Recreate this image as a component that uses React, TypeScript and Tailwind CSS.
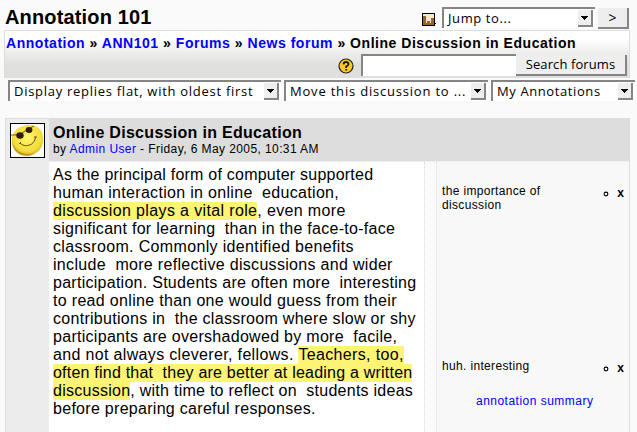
import type { ReactNode } from "react";

const ARIAL = "font-['Liberation_Sans',Arial,sans-serif]";
const HUMAN = "font-['Open_Sans','Noto_Sans',sans-serif]";

function Arrow() {
  return (
    <span className="flex h-[17px] w-[15px] shrink-0 items-center justify-center border-r-2 border-b-2 border-[#858585] bg-[#eeeeee]">
      <svg width="7" height="4" viewBox="0 0 7 4" shapeRendering="crispEdges">
        <path d="M0 0h7v1h-1v1h-1v1h-1v1h-1v-1h-1v-1h-1v-1h-1z" fill="#000" />
      </svg>
    </span>
  );
}

function Select({ className, label, track }: { className: string; label: string; track: string }) {
  return (
    <div className={`flex h-[21px] shrink-0 justify-between border-t-2 border-l-2 border-[#858585] bg-white pr-[2px] pt-px ${HUMAN} ${className}`}>
      <span className={`pl-[4px] text-[13px] leading-[17px] ${track}`}>{label}</span>
      <Arrow />
    </div>
  );
}

function Line({ track, children }: { track: string; children: ReactNode }) {
  return (
    <div className="h-[18px]">
      <span className={track}>{children}</span>
    </div>
  );
}

function Mark({ children }: { children: ReactNode }) {
  return <span className="inline-block h-[18px] bg-[#fdf375] align-top">{children}</span>;
}

function Note({ children }: { children: ReactNode }) {
  return (
    <div className="flex h-[28px] justify-between pl-[5px] pr-[5px] text-[12px] leading-[14px]">
      <div className="tracking-[0.34px]">{children}</div>
      <div className="flex items-start gap-[8px] pt-[2px]">
        <svg className="mt-[5px]" width="6" height="6" viewBox="0 0 6 6">
          <circle cx="3" cy="3" r="1.9" fill="none" stroke="#000" strokeWidth="1.1" />
        </svg>
        <span className="font-bold leading-[15px]">x</span>
      </div>
    </div>
  );
}

function Smiley() {
  return (
    <svg width="35" height="35" viewBox="0 0 35 35">
      <defs>
        <radialGradient id="face" cx=".5" cy=".4" r=".65">
          <stop offset="0" stopColor="#fff56e" />
          <stop offset=".7" stopColor="#f3dc3b" />
          <stop offset="1" stopColor="#c49a1c" />
        </radialGradient>
      </defs>
      <rect width="35" height="35" fill="#fff" />
      <path d="M2 17C2 8 10 1.500 20 2c8 0 13 6 13 13 1 9-5 16-14 18C9 34 1 27 2 17z" fill="url(#face)" />
      <path d="M2.500 19c2 10 12 14 22 11-8 5-21 2-22-11z" fill="#a98516" opacity=".7" />
      <path d="M1 12l8 0 9-6 6-3" fill="none" stroke="#4c3510" strokeWidth=".8" />
      <ellipse cx="10" cy="12.500" rx="3.700" ry="3.200" fill="#301a0b" />
      <ellipse cx="19" cy="7" rx="3.400" ry="3" fill="#301a0b" />
      <path d="M10 20c4 5 15 3 15.500-6M9 21l2-2M24 14l3 0" fill="none" stroke="#69501a" strokeWidth="1" />
      <rect x=".5" y=".5" width="34" height="34" fill="none" stroke="#000" />
    </svg>
  );
}

export default function App() {
  return (
    <div className={`h-[432px] w-[637px] overflow-hidden bg-[#fafafa] text-black ${ARIAL}`}>
      <div className="flex h-[30px] items-start pl-[5px]">
        <h1 className="w-[417px] pt-[5px] text-[20px] leading-[24px] font-bold tracking-[0.15px]">Annotation 101</h1>
        <svg className="mt-[13px] mr-[5px]" width="15" height="13" viewBox="0 0 15 13" shapeRendering="crispEdges">
          <path d="M0 0h13v10h1v1h-1v2H0z" fill="#000" />
          <path d="M1 1h11v11H1z" fill="#f7e8d0" />
          <path d="M1 3h3v9H1zM4 10h1v2H4zM5 8h3v4H5zM8 10h1v2H8zM9 5h3v7H9z" fill="#9a622f" />
        </svg>
        <div className="pt-[7px]"><Select className="w-[153px]" label="Jump to..." track="tracking-[0.6px]" /></div>
        <div className={`mt-[8px] ml-[3px] flex h-[21px] w-[31px] items-center justify-center border-r-2 border-b-2 border-[#858585] bg-[#eeeeee] text-[14px] font-medium ${HUMAN}`}>&gt;</div>
      </div>
      <div className="ml-[4px] h-[48px] w-[626px] border border-[#dddddd] bg-linear-to-b from-white from-15% to-[#dfdfdd] to-75%">
        <div className="h-[23px] pl-px text-[14px] leading-[25px] font-bold whitespace-pre tracking-[0.53px]">
          <span className="text-[#0000ff]">Annotation</span> » <span className="text-[#0000ff]">ANN101</span> » <span className="text-[#0000ff]">Forums</span> » <span className="text-[#0000ff]">News forum</span> » Online Discussion in Education
        </div>
        <div className="flex h-[22px] items-start justify-end pr-[2px]">
          <svg className="mt-[4px] mr-[7px]" width="16" height="16" viewBox="0 0 16 16">
            <circle cx="8" cy="8" r="7" fill="#ffc72e" stroke="#222" strokeWidth="1.2" />
            <path d="M5.500 6.300Q5.700 4 8 4t2.500 2.200Q10.500 7.300 8.200 8.500V10M8.200 11v1.500" fill="none" stroke="#161820" strokeWidth="1.8" />
          </svg>
          <div className="h-[22px] w-[155px] border-t-2 border-l-2 border-[#858585] bg-white" />
          <div className={`mt-px flex h-[21px] w-[111px] items-center justify-center border-r-2 border-b-2 border-[#858585] bg-[#eeeeee] text-[13px] tracking-[0.1px] ${HUMAN}`}>Search forums</div>
        </div>
      </div>
      <div className="flex gap-[3px] pt-[2px] pl-[8px]">
        <Select className="w-[273px]" label="Display replies flat, with oldest first" track="tracking-[0.72px]" />
        <Select className="w-[204px]" label="Move this discussion to ..." track="tracking-[0.8px]" />
        <Select className="w-[144px]" label="My Annotations" track="tracking-[0.6px]" />
      </div>
      <div className="mt-[17px] ml-[5px] flex h-[314px] w-[625px] border-t border-r border-l border-[#dddddd]">
        <div className="w-[43px] shrink-0 bg-[#ececec] pt-[4px] pl-[4px]">
          <Smiley />
        </div>
        <div className="flex flex-1 flex-col">
          <div className="h-[43px] border-b border-[#eeeeee] bg-[#dddddd] pt-[5px] pl-[4px] whitespace-pre">
            <h2 className="text-[16px] leading-[18px] font-bold tracking-[0.3px]">Online Discussion in Education</h2>
            <p className="text-[12px] leading-[14px] tracking-[0.41px]">by <span className="text-[#0000ff]">Admin User</span> - Friday, 6 May 2005, 10:31 AM</p>
          </div>
          <div className="flex flex-1">
            <div className="w-[375px] bg-white pt-[4px] pl-[4px] text-[16px] leading-[18px] whitespace-pre">
              <Line track="tracking-[0.23px]">As the principal form of computer supported</Line>
              <Line track="tracking-[0.31px]">human interaction in online  education,</Line>
              <Line track="tracking-[0.36px]"><Mark>discussion plays a vital role</Mark>, even more</Line>
              <Line track="tracking-[0.28px]">significant for learning  than in the face-to-face</Line>
              <Line track="tracking-[0.35px]">classroom. Commonly identified benefits</Line>
              <Line track="tracking-[0.31px]">include  more reflective discussions and wider</Line>
              <Line track="tracking-[0.27px]">participation. Students are often more  interesting</Line>
              <Line track="tracking-[0.32px]">to read online than one would guess from their</Line>
              <Line track="tracking-[0.29px]">contributions in  the classroom where slow or shy</Line>
              <Line track="tracking-[0.29px]">participants are overshadowed by more  facile,</Line>
              <Line track="tracking-[0.34px]">and not always cleverer, fellows. <Mark>Teachers, too,</Mark></Line>
              <Line track="tracking-[0.22px]"><Mark>often find that  they are better at leading a written</Mark></Line>
              <Line track="tracking-[0.26px]"><Mark>discussion</Mark>, with time to reflect on  students ideas</Line>
              <Line track="tracking-[0.29px]">before preparing careful responses.</Line>
            </div>
            <div className="w-[13px] border-r border-l border-dotted border-[#dddddd] bg-[#fafafa]" />
            <div className="flex-1 bg-[#f8f8f8] pt-[22px]">
              <Note>the importance of<br />discussion</Note>
              <div className="h-[147px]" />
              <Note>huh. interesting</Note>
              <div className="mt-[7px] pl-[39px] text-[12px] leading-[14px] tracking-[0.48px] text-[#0000ff]">annotation summary</div>
            </div>
          </div>
        </div>
      </div>
    </div>
  );
}
